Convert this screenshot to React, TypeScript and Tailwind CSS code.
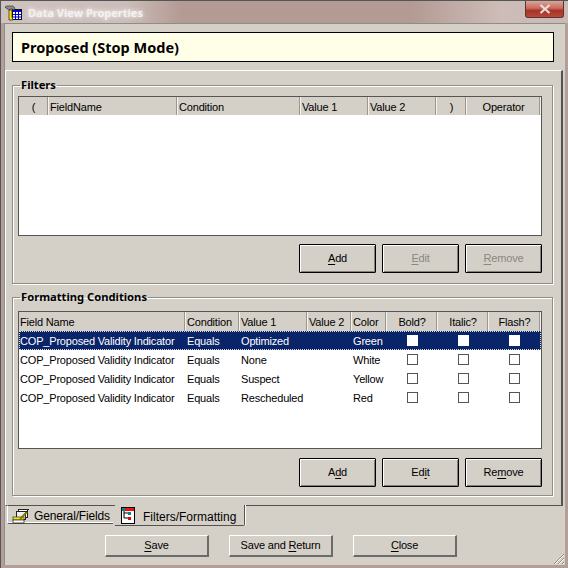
const font = "font-['Liberation_Sans',Arial,sans-serif]";
const boldFont = "font-['Noto_Sans','Liberation_Sans',sans-serif]";

function TitleIcon() {
  return (
    <svg width="18" height="18" viewBox="0 0 18 18" className="ml-[3px] mt-[2px] shrink-0">
      <rect x="8.5" y="6.5" width="9" height="10" fill="#fff" stroke="#111" strokeWidth="1" />
      <rect x="9" y="7" width="8" height="2" fill="#0000d8" />
      <path d="M11.5 7v9M14.5 7v9M9 11.5h8M9 14h8" stroke="#0000d8" strokeWidth="1" />
      <path d="M1 4l2-1h6l2 2-1 2-2-1-2 0-1 1-3-2z" fill="#8e8e8e" stroke="#333" strokeWidth="0.7" />
      <path d="M5 7h3v7l1 3h-4z" fill="#ffe000" stroke="#222" strokeWidth="0.7" />
    </svg>
  );
}

function GeneralIcon() {
  return (
    <svg width="18" height="16" viewBox="0 0 18 16" className="shrink-0">
      <rect x="6.5" y="1.5" width="9" height="8" fill="#fff" stroke="#222" />
      <rect x="4.5" y="3.5" width="9" height="8" fill="#eee" stroke="#222" />
      <rect x="1" y="9" width="11" height="3" fill="#ffe800" stroke="#333" strokeWidth="0.7" />
      <rect x="1" y="12" width="11" height="3" fill="#fff" stroke="#222" strokeWidth="0.7" />
      <path d="M8 11l7-7" stroke="#7a7a00" strokeWidth="2" />
      <path d="M14 4l3-3" stroke="#222" strokeWidth="1" />
    </svg>
  );
}

function FiltersIcon() {
  return (
    <svg width="14" height="17" viewBox="0 0 14 17" className="shrink-0">
      <rect x="0.5" y="0.5" width="13" height="16" fill="#fff" stroke="#000" />
      <rect x="4" y="1" width="9" height="3" fill="#f01010" />
      <path d="M3 3v8M3 6h5M3 11h5" stroke="#000" fill="none" />
      <rect x="1" y="1" width="3" height="3" fill="#108080" />
      <rect x="7" y="5" width="3" height="3" fill="#108080" />
      <rect x="7" y="10" width="3" height="3" fill="#d01010" />
    </svg>
  );
}

function Accel({ pre, k, post }: { pre: string; k: string; post: string }) {
  return (
    <span>
      {pre}
      <span className="underline underline-offset-2">{k}</span>
      {post}
    </span>
  );
}

function DlgButton({ children, disabled }: { children: React.ReactNode; disabled?: boolean }) {
  return (
    <div
      className={`w-[77px] h-[29px] border border-black rounded-[1px] bg-[#d4d0c8] flex items-center justify-center text-[11px] tracking-[-0.18px] shadow-[inset_1px_1px_0_#fff,inset_-1px_-1px_0_#808080] ${disabled ? "text-[#8a8780]" : "text-black"}`}
    >
      {children}
    </div>
  );
}

function BottomButton({ children }: { children: React.ReactNode }) {
  return (
    <div className="w-[104px] h-[22px] border-t border-l border-t-white border-l-white border-b-2 border-r-2 border-b-[#6b6b6b] border-r-[#6b6b6b] bg-[#d4d0c8] flex items-center justify-center text-[11px] tracking-[-0.18px] text-black">
      {children}
    </div>
  );
}

type Col = { label: string; w: number; center?: boolean };

function HeaderRow({ cols, h }: { cols: Col[]; h: number }) {
  return (
    <div className="flex shrink-0 bg-[#d4d0c8]" style={{ height: h }}>
      {cols.map((c) => (
        <div
          key={c.label}
          style={{ width: c.w }}
          className={`h-full flex items-center border-r border-r-[#f4f2ee] shadow-[inset_-1px_0_0_#9a978f] text-[11px] tracking-[-0.18px] whitespace-nowrap overflow-hidden ${h === 18 ? "pt-[2px]" : "pt-[1px]"} ${c.center ? "justify-center" : "pl-[1px]"}`}
        >
          {c.label}
        </div>
      ))}
    </div>
  );
}

function GroupBox({ title, top, children }: { title: string; top: string; children: React.ReactNode }) {
  return (
    <fieldset className="ml-[6px] w-[541px] h-[205px] shrink-0 border border-[#8f8d87] shadow-[inset_1px_1px_0_#fff,1px_1px_0_#fff] flex flex-col">
      <legend className={`${boldFont} ml-[7px] px-[1px] h-[12px] leading-[12px] text-[11.2px] font-bold text-black`}>{title}</legend>
      <div className={`${top} ml-[5px] mr-[10px] flex-1 flex flex-col`}>{children}</div>
    </fieldset>
  );
}

const filterCols: Col[] = [
  { label: "(", w: 30, center: true },
  { label: "FieldName", w: 129 },
  { label: "Condition", w: 123 },
  { label: "Value 1", w: 68 },
  { label: "Value 2", w: 68 },
  { label: ")", w: 30, center: true },
  { label: "Operator", w: 74, center: true },
];

const formatCols: Col[] = [
  { label: "Field Name", w: 167 },
  { label: "Condition", w: 54 },
  { label: "Value 1", w: 68 },
  { label: "Value 2", w: 44 },
  { label: "Color", w: 35 },
  { label: "Bold?", w: 51, center: true },
  { label: "Italic?", w: 51, center: true },
  { label: "Flash?", w: 52, center: true },
];

const rows = [
  { value: "Optimized", color: "Green" },
  { value: "None", color: "White" },
  { value: "Suspect", color: "Yellow" },
  { value: "Rescheduled", color: "Red" },
];

function Check({ selected }: { selected: boolean }) {
  return (
    <div className="w-[51px] flex justify-center -mt-[1px]">
      <div className={`w-[11px] h-[11px] bg-white border ${selected ? "border-white" : "border-[#555]"}`} />
    </div>
  );
}

export default function App() {
  return (
    <div className={`${font} relative w-[568px] h-[568px] bg-[#b39f99] flex flex-col border-t border-l border-[#555] text-black overflow-hidden`}>
      {/* title bar */}
      <div className="h-[22px] shrink-0 flex items-start bg-[linear-gradient(90deg,#cfc3bf_0%,#cbbdb9_22%,#b39a94_32%,#b39a94_72%,#cdbcb7_88%,#c9bab5_100%)]">
        <TitleIcon />
        <span className={`${boldFont} ml-[6px] mt-[5px] text-[11px] font-bold text-[#f4f2f0] leading-[14px] [text-shadow:0_0_5px_#fff]`}>Data View Properties</span>
        <div className="ml-auto mr-[4px] w-[39px] h-[17px] rounded-b-[3px] border border-t-0 border-[#5d3330] bg-[linear-gradient(180deg,#d9a79c_0%,#c96a5c_45%,#a83225_60%,#b5493a_100%)] flex items-center justify-center">
          <svg width="12" height="10" viewBox="0 0 12 10">
            <path d="M1.5 1l9 8M10.5 1l-9 8" stroke="#e8e0da" strokeWidth="2.2" />
          </svg>
        </div>
      </div>

      {/* dialog body */}
      <div className="mx-[3px] mb-[3px] flex-1 bg-[#d4d0c8] border-t border-l border-[#8f8d87] flex flex-col relative">
        <div className={`${boldFont} mt-[8px] ml-[7px] w-[542px] h-[30px] shrink-0 border border-black bg-[#ffffe8] flex items-center pl-[8px] pt-[2px] text-[14.5px] font-bold`}>
          Proposed (Stop Mode)
        </div>

        {/* tab page */}
        <div className="mt-[8px] w-[558px] h-[436px] shrink-0 border-t border-l border-white border-r-2 border-r-[#55534f] border-b border-b-[#55534f] flex flex-col">
          <div className="h-[8px] shrink-0" />
          <GroupBox title="Filters" top="mt-[5px]">
            <div className="h-[140px] shrink-0 border border-[#555] bg-white flex flex-col">
              <HeaderRow cols={filterCols} h={18} />
            </div>
            <div className="mt-[8px] flex justify-end gap-[6px]">
              <DlgButton><Accel pre="" k="A" post="dd" /></DlgButton>
              <DlgButton disabled><Accel pre="" k="E" post="dit" /></DlgButton>
              <DlgButton disabled><Accel pre="" k="R" post="emove" /></DlgButton>
            </div>
          </GroupBox>
          <div className="h-[7px] shrink-0" />
          <GroupBox title="Formatting Conditions" top="mt-[8px]">
            <div className="h-[138px] shrink-0 border border-[#555] bg-white flex flex-col">
              <HeaderRow cols={formatCols} h={19} />
              {rows.map((r, i) => (
                <div
                  key={r.value}
                  className={`h-[19px] shrink-0 flex items-center pt-[1px] text-[11px] tracking-[-0.18px] whitespace-nowrap ${i === 0 ? "bg-[#0a246a] text-white outline-1 outline-dotted outline-[#ddd] -outline-offset-1" : ""}`}
                >
                  <div className="w-[167px] pl-[1px]">COP_Proposed Validity Indicator</div>
                  <div className="w-[54px] pl-[1px]">Equals</div>
                  <div className="w-[68px] pl-[1px]">{r.value}</div>
                  <div className="w-[44px]" />
                  <div className="w-[35px] pl-[1px]">{r.color}</div>
                  <Check selected={i === 0} />
                  <Check selected={i === 0} />
                  <Check selected={i === 0} />
                </div>
              ))}
            </div>
            <div className="mt-[9px] flex justify-end gap-[6px]">
              <DlgButton><Accel pre="A" k="d" post="d" /></DlgButton>
              <DlgButton><Accel pre="Ed" k="i" post="t" /></DlgButton>
              <DlgButton><Accel pre="Re" k="m" post="ove" /></DlgButton>
            </div>
          </GroupBox>
        </div>

        {/* tabs */}
        <div className="flex items-start pl-[2px] h-[21px] shrink-0 -mt-[1px]">
          <div className="w-[106px] h-[19px] pt-[2px] bg-[#d4d0c8] border-t border-t-[#55534f] border-l border-l-white border-b border-b-[#55534f] rounded-bl-[2px] flex items-center pl-[4px] gap-[4px] text-[12px] tracking-[-0.15px] shadow-[inset_0_-1px_0_#fff]">
            <GeneralIcon />
            <span>General/Fields</span>
          </div>
          <div className="ml-[2px] w-[130px] h-[21px] bg-[#d4d0c8] border-r border-r-[#55534f] border-b border-b-[#55534f] rounded-br-[2px] flex items-center pl-[6px] gap-[8px] text-[12px] shadow-[1px_0_0_#fff]">
            <FiltersIcon />
            <span className="mt-[3px]">Filters/Formatting</span>
          </div>
        </div>

        {/* bottom buttons */}
        <div className="mt-[9px] ml-[100px] flex gap-[20px]">
          <BottomButton><Accel pre="" k="S" post="ave" /></BottomButton>
          <BottomButton><Accel pre="Save and " k="R" post="eturn" /></BottomButton>
          <BottomButton><Accel pre="" k="C" post="lose" /></BottomButton>
        </div>

        {/* resize grip */}
        <svg width="13" height="13" viewBox="0 0 13 13" className="absolute right-0 bottom-0">
          <path d="M12 2L2 12M12 6L6 12M12 10L10 12" stroke="#8f8d87" strokeWidth="1" />
          <path d="M12 3L3 12M12 7L7 12M12 11L11 12" stroke="#fff" strokeWidth="1" />
        </svg>
      </div>
    </div>
  );
}
